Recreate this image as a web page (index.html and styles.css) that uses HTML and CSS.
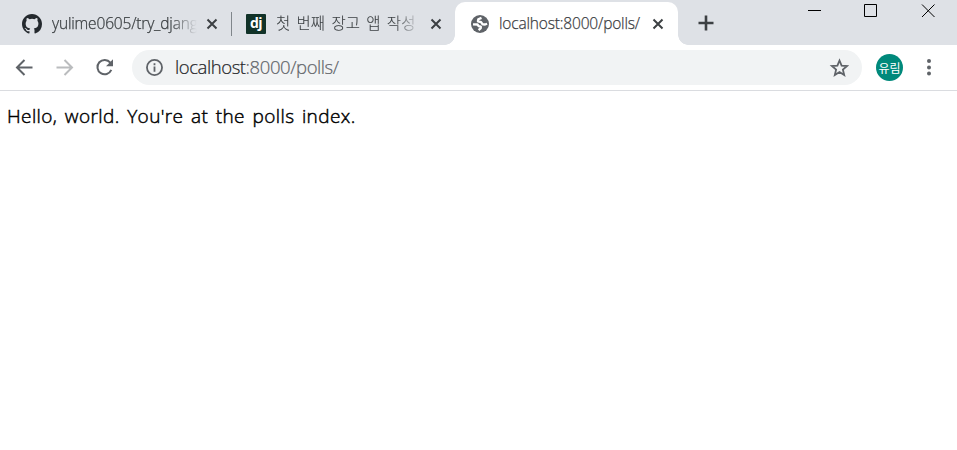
FILE: index.html
```html
<!DOCTYPE html>
<html lang="ko">
<head>
<meta charset="utf-8">
<title>localhost:8000/polls/</title>
<link rel="stylesheet" href="styles.css">
</head>
<body>
<header class="tabstrip">
  <div class="tab tab-first">
    <svg class="favicon" viewBox="0 0 16 16"><path fill="#24292e" d="M8 0C3.58 0 0 3.58 0 8c0 3.54 2.29 6.53 5.47 7.59.4.07.55-.17.55-.38 0-.19-.01-.82-.01-1.49-2.01.37-2.53-.49-2.69-.94-.09-.23-.48-.94-.82-1.13-.28-.15-.68-.52-.01-.53.63-.01 1.08.58 1.23.82.72 1.21 1.87.87 2.33.66.07-.52.28-.87.51-1.07-1.78-.2-3.64-.89-3.64-3.95 0-.87.31-1.59.82-2.15-.08-.2-.36-1.02.08-2.12 0 0 .67-.21 2.2.82a7.4 7.4 0 0 1 4 0c1.53-1.04 2.2-.82 2.2-.82.44 1.1.16 1.92.08 2.12.51.56.82 1.27.82 2.15 0 3.07-1.87 3.75-3.65 3.95.29.25.54.73.54 1.48 0 1.07-.01 1.93-.01 2.2 0 .21.15.46.55.38A8.01 8.01 0 0 0 16 8c0-4.42-3.58-8-8-8z"/></svg>
    <span class="tab-title fade">yulime0605/try_djang</span>
    <svg class="close" viewBox="0 0 12 12"><path d="M1.5 1.5l9 9m0-9l-9 9"/></svg>
  </div>
  <div class="separator"></div>
  <div class="tab tab-second">
    <span class="favicon django">dj</span>
    <span class="tab-title fade title-ko">첫 번째 장고 앱 작성</span>
    <svg class="close" viewBox="0 0 12 12"><path d="M1.5 1.5l9 9m0-9l-9 9"/></svg>
  </div>
  <div class="tab tab-active">
    <svg class="globe" viewBox="0 0 18 18"><circle cx="9" cy="9" r="9" fill="#5f6368"/><path stroke="#fff" stroke-width="2.300" stroke-linejoin="round" d="M10.500 2.900L7.300 4.300 6.900 6.300l3.200.9 1.500 2.200 2.500.1 2-.8M2 9.300l4.500.2 1.300 1.700 2 .4v1.500l-2.200 2"/></svg>
    <span class="tab-title title-local">localhost:8000/polls/</span>
    <svg class="close" viewBox="0 0 12 12"><path d="M1.500 1.500l9 9m0-9l-9 9"/></svg>
  </div>
  <svg class="plus" viewBox="0 0 16 16"><path d="M8 .5v15M.5 8h15"/></svg>
  <div class="window-controls">
    <svg viewBox="0 0 14 14"><path d="M1 7.500h13"/></svg>
    <svg viewBox="0 0 14 14"><path d="M.5 1.500h12v12H.5z"/></svg>
    <svg viewBox="0 0 14 14"><path d="M1 1.500l12.500 12.500M13.500 1.500L1 14"/></svg>
  </div>
</header>
<nav class="toolbar">
  <svg class="nav-icon" viewBox="0 0 20 20"><path d="M17.500 9.500H2.500M9.500 2L2 9.500 9.500 17"/></svg>
  <svg class="nav-icon disabled" viewBox="0 0 20 20"><path d="M1.500 9.500h15M9.500 2L17 9.500 9.500 17"/></svg>
  <svg class="nav-icon" viewBox="0 0 20 20"><path d="M15.300 4.600A7.200 7.200 0 1 0 16.300 11.900"/><path class="solid" d="M18 1.300v7h-7z"/></svg>
  <div class="address">
    <svg class="info" viewBox="0 0 16 16"><circle cx="8" cy="8" r="7.100"/><path d="M8 7v5M8 4v1.800"/></svg>
    <span class="url">localhost<span class="path">:8000/polls/</span></span>
    <svg class="star" viewBox="0 0 20 20"><path d="M10.500 2.500l2.100 5.100 5.500.4-4.200 3.600 1.300 5.400-4.700-2.900L5.800 17l1.300-5.400L2.900 8l5.500-.4z"/></svg>
  </div>
  <span class="avatar">유림</span>
  <svg class="menu" viewBox="0 0 4 18"><circle cx="2" cy="2" r="2"/><circle cx="2" cy="8.500" r="2"/><circle cx="2" cy="14.500" r="2"/></svg>
</nav>
<main class="content">Hello, world. You're at the polls index.</main>
</body>
</html>
```
FILE: styles.css
```css
* { box-sizing: border-box; }
body {
  margin: 0;
  height: 450px;
  overflow: hidden;
  background: #fff;
  font-family: "Open Sans", "Noto Sans CJK KR", sans-serif;
}
svg { display: block; flex: none; fill: none; }
.tabstrip { display: flex; height: 45px; background: #dee1e6; }
.tab { display: flex; align-items: center; height: 43px; margin-top: 2px; flex: none; }
.tab-first { width: 231px; padding-left: 22px; }
.tab-second { width: 223px; padding-left: 14px; }
.tab-active {
  position: relative;
  width: 223px;
  padding-left: 16px;
  background: #fff;
  border-radius: 10px 10px 0 0;
}
.tab-active::before, .tab-active::after {
  content: "";
  position: absolute;
  bottom: 0;
  width: 10px;
  height: 10px;
}
.tab-active::before { left: -10px; background: radial-gradient(circle at 0 0, transparent 9.5px, #fff 10px); }
.tab-active::after { right: -10px; background: radial-gradient(circle at 100% 0, transparent 9.5px, #fff 10px); }
.favicon { width: 20px; height: 20px; flex: none; }
.django {
  border-radius: 1px;
  background: #113228;
  color: #fff;
  font: bold 14px/18px "Open Sans", sans-serif;
  letter-spacing: -0.5px;
  text-align: center;
}
.globe { width: 18px; height: 18px; }
.tab-title {
  flex: none;
  width: 145px;
  margin-left: 10px;
  overflow: hidden;
  white-space: nowrap;
  color: #3c4043;
  font-size: 15.5px;
  font-weight: 300;
  -webkit-text-stroke: 0.25px currentColor;
  letter-spacing: -0.17px;
  line-height: 24px;
  padding-bottom: 1px;
}
.fade { -webkit-mask-image: linear-gradient(90deg, #000 82%, transparent); mask-image: linear-gradient(90deg, #000 82%, transparent); }
.title-ko { font-size: 15.5px; letter-spacing: 0; word-spacing: 2.3px; -webkit-text-stroke: 0.1px currentColor; }
.close { width: 12px; height: 12px; margin-left: 9px; stroke: #3c4043; stroke-width: 2; }
.tab-active .close { margin-left: 8px; }
.separator { width: 1px; height: 24px; margin-top: 12px; background: #80868b; flex: none; }
.plus { width: 16px; height: 16px; margin: 15px 0 0 20px; stroke: #3c4043; stroke-width: 2.6; }
.window-controls { display: flex; gap: 43px; margin: 3px 22px 0 auto; }
.window-controls svg { width: 14px; height: 14px; stroke: #000; stroke-width: 1; overflow: visible; }
.toolbar {
  display: flex;
  align-items: center;
  height: 46px;
  padding-left: 15px;
  border-bottom: 1px solid #dadce0;
}
.nav-icon { width: 20px; height: 20px; margin-right: 20px; stroke: #5f6368; stroke-width: 2; }
.nav-icon + .nav-icon + .nav-icon { margin-right: 17px; }
.disabled { stroke: #babcbe; }
.solid { fill: #5f6368; stroke: none; }
.address {
  display: flex;
  align-items: center;
  width: 730px;
  height: 35px;
  padding: 0 13px 0 14px;
  border-radius: 18px;
  background: #f1f3f4;
  flex: none;
}
.info { width: 17px; height: 17px; stroke: #5f6368; stroke-width: 1.7; }
.url {
  margin-left: 12px;
  padding-bottom: 1px;
  color: #202124;
  font-size: 18.5px;
  font-weight: 300;
  -webkit-text-stroke: 0.2px currentColor;
  letter-spacing: -0.42px;
  line-height: 28px;
}
.path { color: #5f6368; }
.star { width: 20px; height: 20px; margin-left: auto; stroke: #5f6368; stroke-width: 1.8; }
.avatar {
  width: 27px;
  height: 27px;
  margin-left: 14px;
  border-radius: 50%;
  background: #00897b;
  color: #fff;
  font: 12px/27px "Noto Sans CJK KR", sans-serif;
  text-align: center;
}
.menu { width: 4px; height: 18px; margin-left: 24px; fill: #5f6368; }
.content {
  padding: 11px 7px;
  color: #000;
  font-size: 19px;
  font-weight: 300;
  -webkit-text-stroke: 0.45px currentColor;
  letter-spacing: 0.4px;
  word-spacing: 2.2px;
  line-height: 28px;
  white-space: nowrap;
}
```
